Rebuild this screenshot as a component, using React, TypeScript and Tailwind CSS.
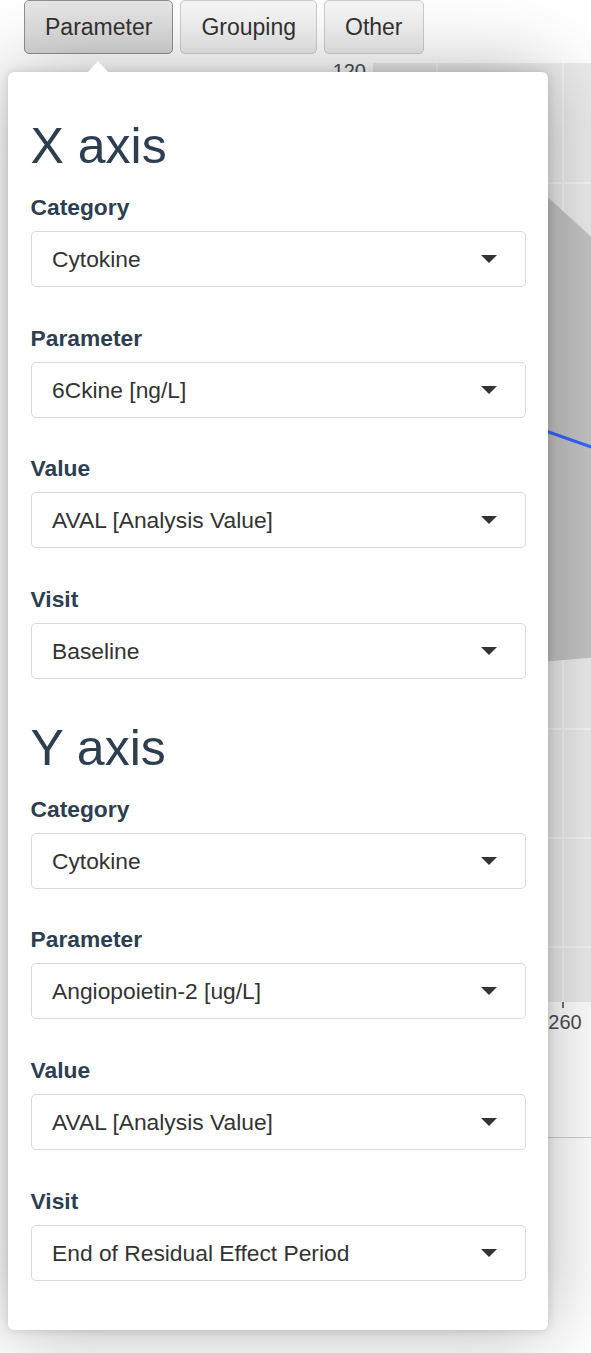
import React from "react";

type Field = { label: string; value: string };

const xFields: Field[] = [
  { label: "Category", value: "Cytokine" },
  { label: "Parameter", value: "6Ckine [ng/L]" },
  { label: "Value", value: "AVAL [Analysis Value]" },
  { label: "Visit", value: "Baseline" },
];

const yFields: Field[] = [
  { label: "Category", value: "Cytokine" },
  { label: "Parameter", value: "Angiopoietin-2 [ug/L]" },
  { label: "Value", value: "AVAL [Analysis Value]" },
  { label: "Visit", value: "End of Residual Effect Period" },
];

function Caret() {
  return (
    <svg width="16" height="8" viewBox="0 0 16 8">
      <path d="M0 0H16L8 8Z" fill="#333" />
    </svg>
  );
}

function SelectField({ label, value }: Field) {
  return (
    <div className="mb-[34.67px]">
      <label className="block text-[22.8px] leading-[32px] font-bold text-[#2c3e50] mb-2">{label}</label>
      <div className="flex h-[56px] items-center justify-between rounded-[5px] border border-[#d9d9d9] bg-white pl-[20.5px] pr-[28px] text-[22.8px] text-[#333]">
        <span>{value}</span>
        <Caret />
      </div>
    </div>
  );
}

function TabButton({ label, active }: { label: string; active?: boolean }) {
  return (
    <button
      className={
        active
          ? "h-[54px] rounded-[5px] border border-[#8f8f8f] bg-gradient-to-b from-[#e6e6e6] to-[#d6d6d6] px-5 text-[23px] text-[#333]"
          : "h-[54px] rounded-[5px] border border-[#cccccc] bg-gradient-to-b from-[#f7f7f7] to-[#ececec] px-5 text-[23px] text-[#333]"
      }
    >
      {label}
    </button>
  );
}

function PlotBehind() {
  const hLines = [183, 292, 401, 510, 620, 729, 838, 947];
  return (
    <svg className="block" width="591" height="1299" viewBox="0 54 591 1299">
      <rect x="373" y="63" width="260" height="939" fill="#ebebeb" />
      {hLines.map((y) => (
        <line key={y} x1="373" x2="600" y1={y} y2={y} stroke="#fafafa" strokeWidth="1.4" />
      ))}
      <line x1="437" x2="437" y1="63" y2="1002" stroke="#fafafa" strokeWidth="1.4" />
      <line x1="563" x2="563" y1="63" y2="1002" stroke="#fafafa" strokeWidth="1.4" />
      <polygon points="540,190 600,245 600,657 540,662" fill="#c4c4c4" />
      <line x1="540" y1="429" x2="600" y2="450" stroke="#3366ff" strokeWidth="3" />
      <line x1="563" x2="563" y1="1002" y2="1008" stroke="#333" strokeWidth="1.4" />
      <text x="565" y="1029" fontSize="20" fill="#4d4d4d" textAnchor="middle" fontFamily="Liberation Sans, Arial, sans-serif">
        260
      </text>
      <text x="366" y="78" fontSize="20" fill="#4d4d4d" textAnchor="end" fontFamily="Liberation Sans, Arial, sans-serif">
        120
      </text>
      <line x1="540" x2="591" y1="1137.5" y2="1137.5" stroke="#cfcfcf" strokeWidth="1" />
    </svg>
  );
}

export default function App() {
  return (
    <div className="relative w-[591px] h-[1353px] overflow-hidden bg-white font-['Liberation_Sans',Arial,sans-serif]">
      <div className="flex gap-[7px] pl-6">
        <TabButton label="Parameter" active />
        <TabButton label="Grouping" />
        <TabButton label="Other" />
      </div>

      <PlotBehind />

      <div className="absolute left-2 top-[72px] w-[540px] rounded-[6px] bg-white px-[22.5px] pt-[45px] pb-[15px] shadow-[0_0_10px_rgba(0,0,0,0.14),0_0_80px_rgba(0,0,0,0.3)]">
        <svg className="absolute left-[79px] -top-[11px]" width="22" height="12" viewBox="0 0 22 12">
          <path d="M0 12L11 0L22 12Z" fill="#fff" />
        </svg>
        <h1 className="text-[50px] leading-[59px] font-normal text-[#2c3e50] mb-[15px]">X axis</h1>
        {xFields.map((f) => (
          <SelectField key={"x" + f.label} {...f} />
        ))}
        <h1 className="text-[50px] leading-[59px] font-normal text-[#2c3e50] mt-[39.67px] mb-[15px]">Y axis</h1>
        {yFields.map((f) => (
          <SelectField key={"y" + f.label} {...f} />
        ))}
      </div>
    </div>
  );
}
